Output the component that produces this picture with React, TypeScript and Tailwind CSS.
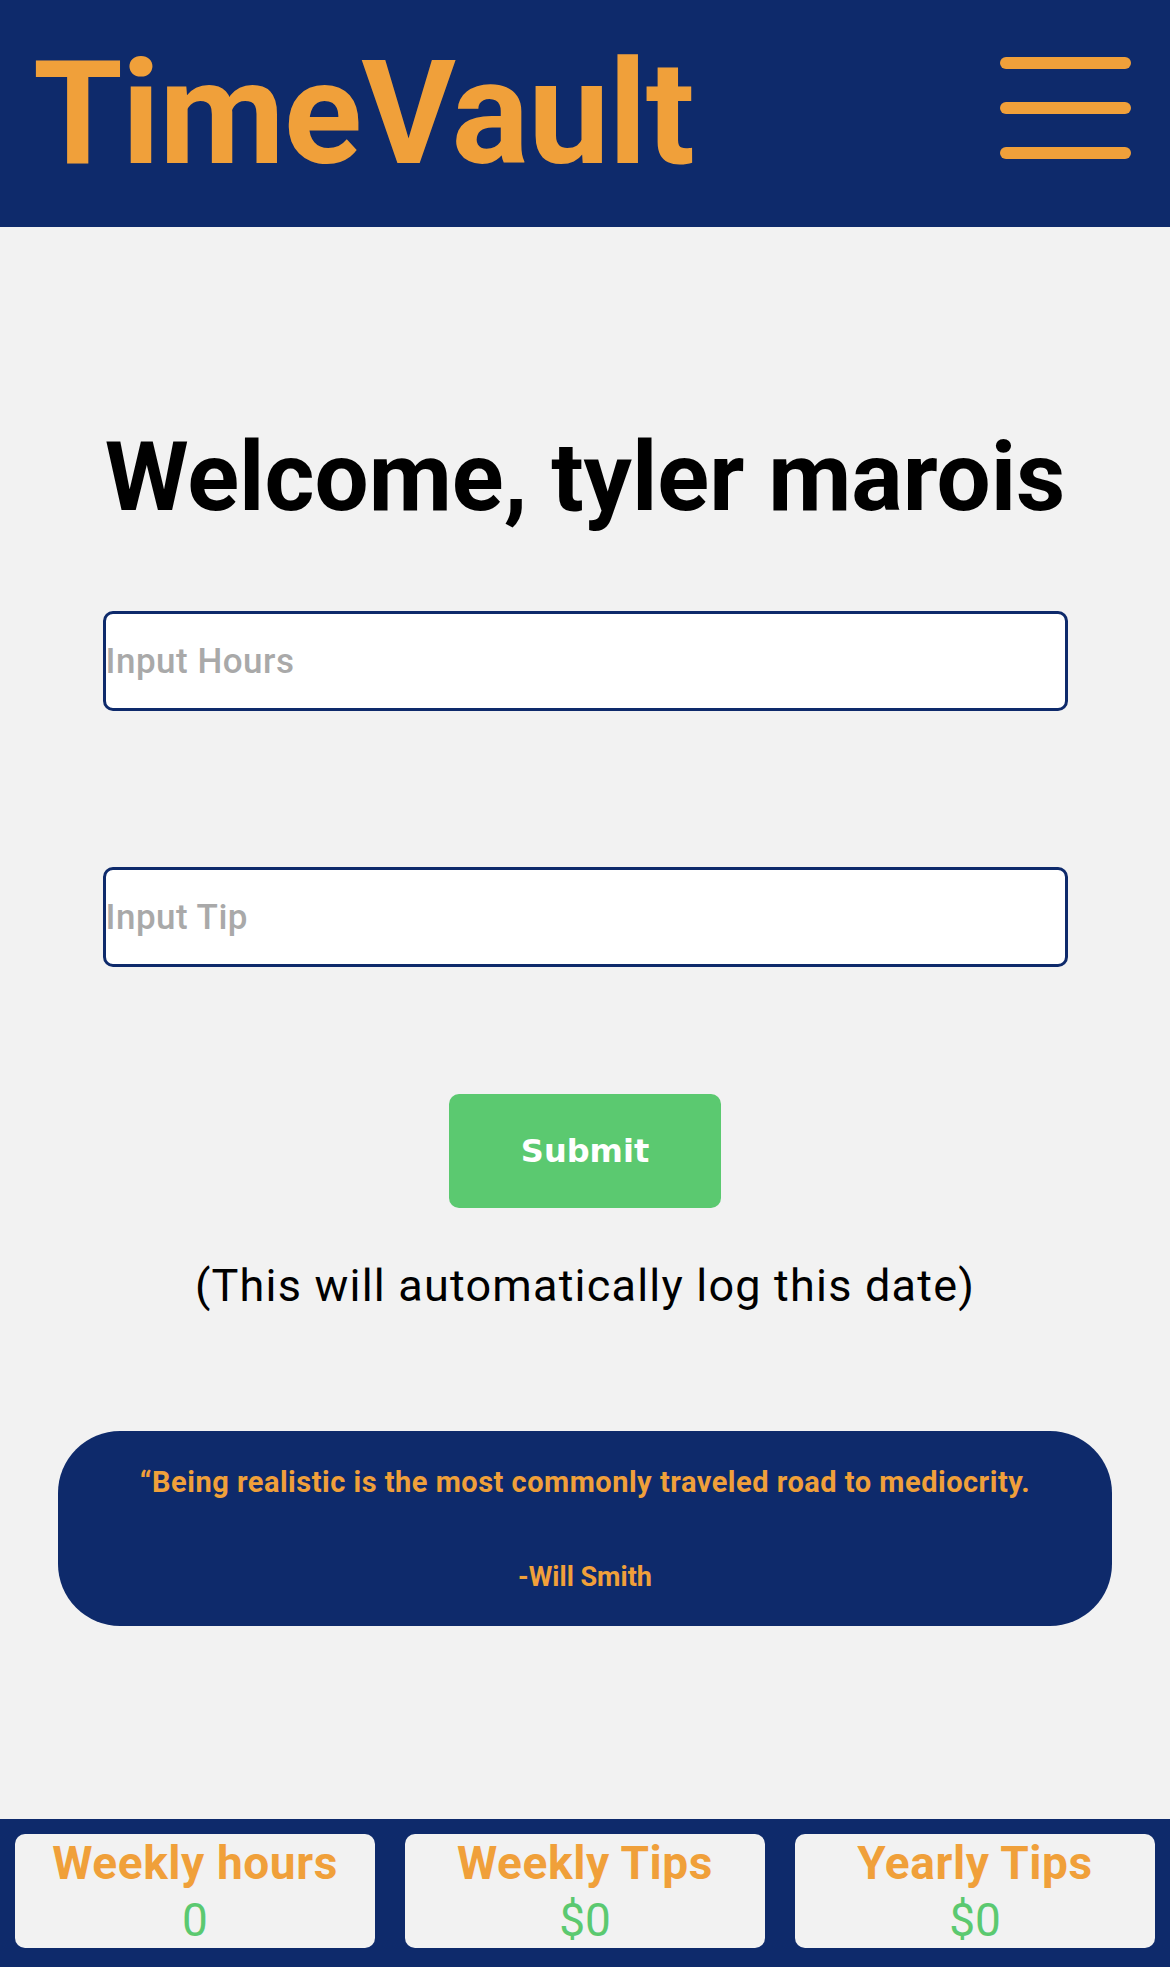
import React from "react";

export default function App() {
  const roboto = { fontFamily: "Roboto, 'Liberation Sans', sans-serif" };
  return (
    <div className="min-h-screen flex flex-col bg-[#F2F2F2]" style={roboto}>
      <header className="h-[227px] bg-[#0E2A6B] flex items-start justify-between">
        <div className="ml-[33px] mt-[41px] text-[145px] leading-none font-bold text-[#F0A03A] tracking-[-1px]">
          TimeVault
        </div>
        <div className="mr-[39px] mt-[57px] flex flex-col gap-[33px]">
          <div className="w-[131px] h-[12px] rounded-full bg-[#F0A03A]" />
          <div className="w-[131px] h-[12px] rounded-full bg-[#F0A03A]" />
          <div className="w-[131px] h-[12px] rounded-full bg-[#F0A03A]" />
        </div>
      </header>

      <main className="flex-1 flex flex-col items-center">
        <h1 className="mt-[202px] text-[96px] leading-none font-bold text-black">
          Welcome, tyler marois
        </h1>
        <input
          className="mt-[86px] w-[965px] h-[100px] bg-white border-[3px] border-[#0E2A6B] rounded-[10px] px-0 text-[35px] tracking-[0.5px] font-medium outline-none placeholder:text-[#A9A9A9]"
          placeholder="Input Hours"
        />
        <input
          className="mt-[156px] w-[965px] h-[100px] bg-white border-[3px] border-[#0E2A6B] rounded-[10px] px-0 text-[35px] tracking-[0.5px] font-medium outline-none placeholder:text-[#A9A9A9]"
          placeholder="Input Tip"
        />
        <button
          className="mt-[127px] w-[272px] h-[114px] rounded-[10px] bg-[#5BC970] text-white text-[32px] font-bold"
          style={{ fontFamily: "'DejaVu Sans', Verdana, sans-serif" }}
        >
          Submit
        </button>
        <p className="mt-[55px] text-[45px] leading-none tracking-[1.2px] text-black">
          (This will automatically log this date)
        </p>
        <div className="mt-[123px] w-[1054px] h-[195px] rounded-[62px] bg-[#0E2A6B] flex flex-col items-center pt-[37px]">
          <p className="text-[29px] leading-none font-bold tracking-[0.5px] text-[#F0A03A]">
            “Being realistic is the most commonly traveled road to mediocrity.
          </p>
          <p className="mt-[67px] text-[27px] leading-none font-bold text-[#F0A03A]">
            -Will Smith
          </p>
        </div>
      </main>

      <footer className="h-[148px] bg-[#0E2A6B] grid grid-cols-3 gap-[30px] px-[15px] pt-[15px]">
        {[
          ["Weekly hours", "0"],
          ["Weekly Tips", "$0"],
          ["Yearly Tips", "$0"],
        ].map(([t, v]) => (
          <div
            key={t}
            className="h-[114px] rounded-[10px] bg-[#F2F2F2] flex flex-col items-center pt-[6px]"
          >
            <div className="text-[46px] leading-none font-bold tracking-[0.6px] text-[#F0A03A]">{t}</div>
            <div className="mt-[11px] text-[46px] leading-none text-[#5BC970]">{v}</div>
          </div>
        ))}
      </footer>
    </div>
  );
}
